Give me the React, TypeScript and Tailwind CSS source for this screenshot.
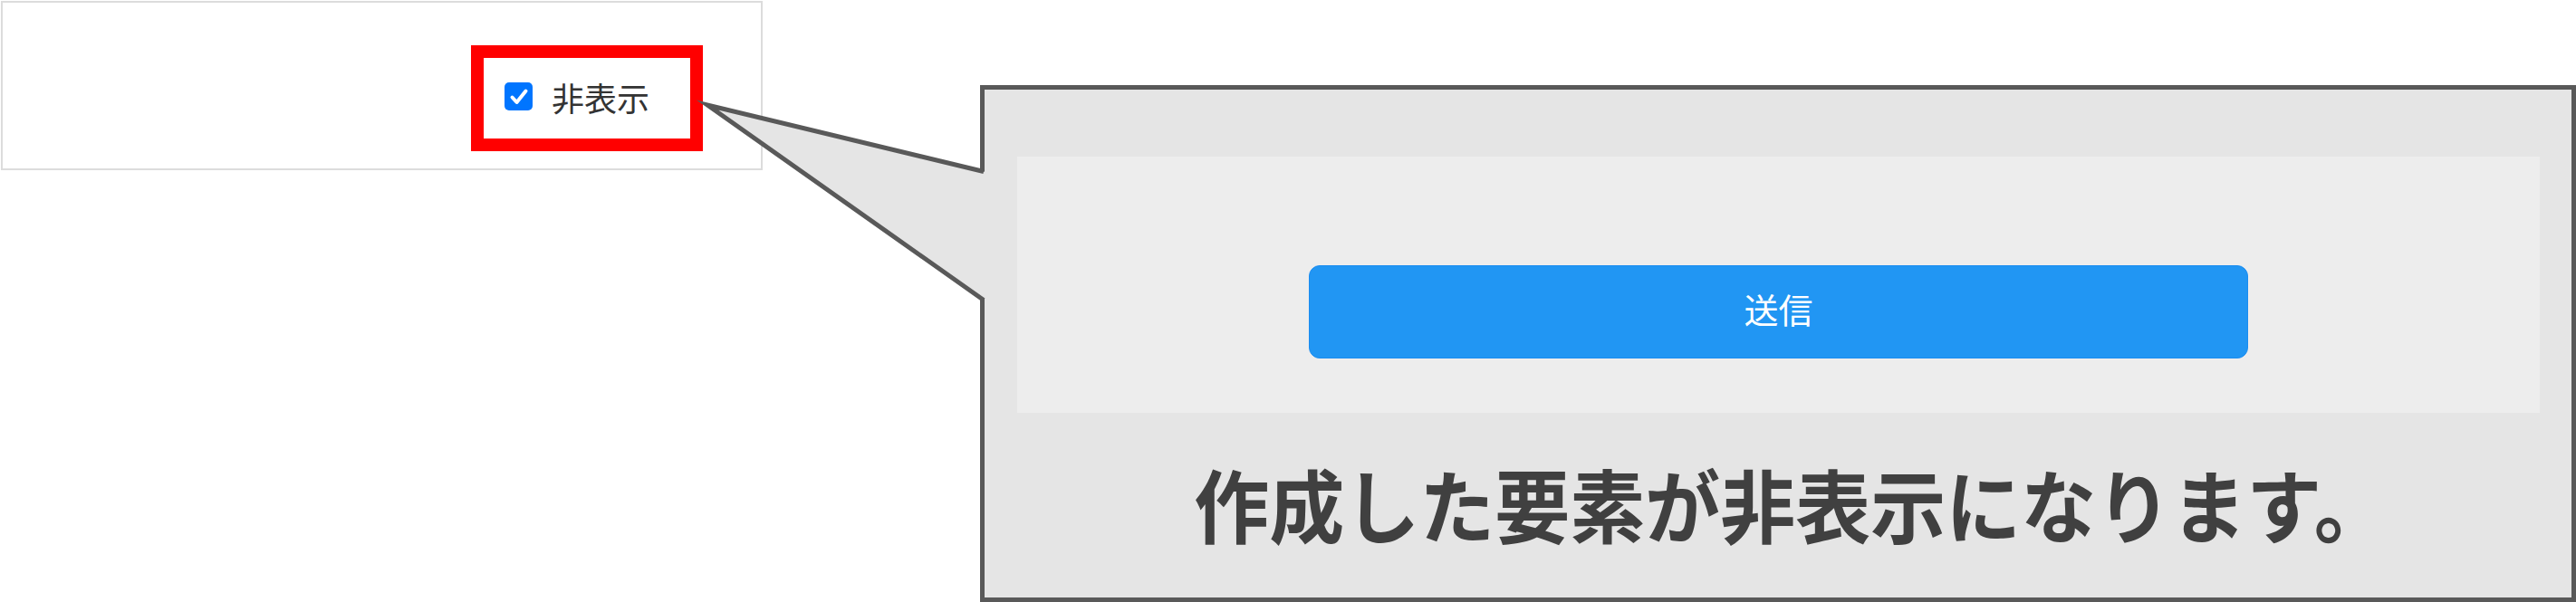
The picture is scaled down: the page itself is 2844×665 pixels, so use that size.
import React from "react";

export default function App() {
  return (
    <div
      className="relative w-[2844px] h-[665px] bg-white overflow-hidden"
      style={{ fontFamily: '"Noto Sans CJK JP", "Noto Sans", sans-serif' }}
    >
      {/* Original UI fragment */}
      <div className="ml-[1px] mt-[1px] w-[841px] h-[187px] border-2 border-[#dcdcdc] bg-white pl-[517px] pt-[47px]">
        <div className="w-[256px] h-[117px] border-[14px] border-[#ff0000] bg-white flex items-center pl-[23px] pb-[4px]">
          <div className="w-[31px] h-[31px] rounded-[5px] bg-[#0075ff] flex items-center justify-center shrink-0">
            <svg width="26" height="26" viewBox="0 0 26 26">
              <path d="M5.5 13.5 L10.5 19 L20.5 6.5" fill="none" stroke="#ffffff" strokeWidth="4" strokeLinecap="round" strokeLinejoin="round" />
            </svg>
          </div>
          <span className="ml-[21px] text-[36px] leading-none text-[#333333] whitespace-nowrap">非表示</span>
        </div>
      </div>

      {/* Callout */}
      <div className="absolute left-[1082px] top-[94px] w-[1762px] h-[571px] border-[5px] border-[#595959] bg-[#e5e5e5] flex flex-col">
        <div className="ml-[36px] mr-[35px] mt-[74px] h-[283px] bg-[#ededed] pt-[120px]">
          <div className="mx-auto w-[1037px] h-[103px] rounded-[12px] bg-[#2196f3] border border-[#1a8cf0] flex items-center justify-center pb-[8px]">
            <span className="text-[38px] leading-none text-white">送信</span>
          </div>
        </div>
        <div className="mt-[58px] pl-[30px] text-center text-[83px] leading-none font-bold text-[#404040] whitespace-nowrap scale-y-[1.06]">
          作成した要素が非表示になります。
        </div>
      </div>

      {/* Pointer */}
      <svg className="absolute left-0 top-0 pointer-events-none" width="2844" height="665" viewBox="0 0 2844 665">
        <polygon points="1088,190 781,116 1088,331" fill="#e5e5e5" />
        <polyline points="1086,189.5 781,116 1086,331.5" fill="none" stroke="#595959" strokeWidth="5" strokeLinejoin="miter" strokeMiterlimit="20" />
      </svg>
    </div>
  );
}
